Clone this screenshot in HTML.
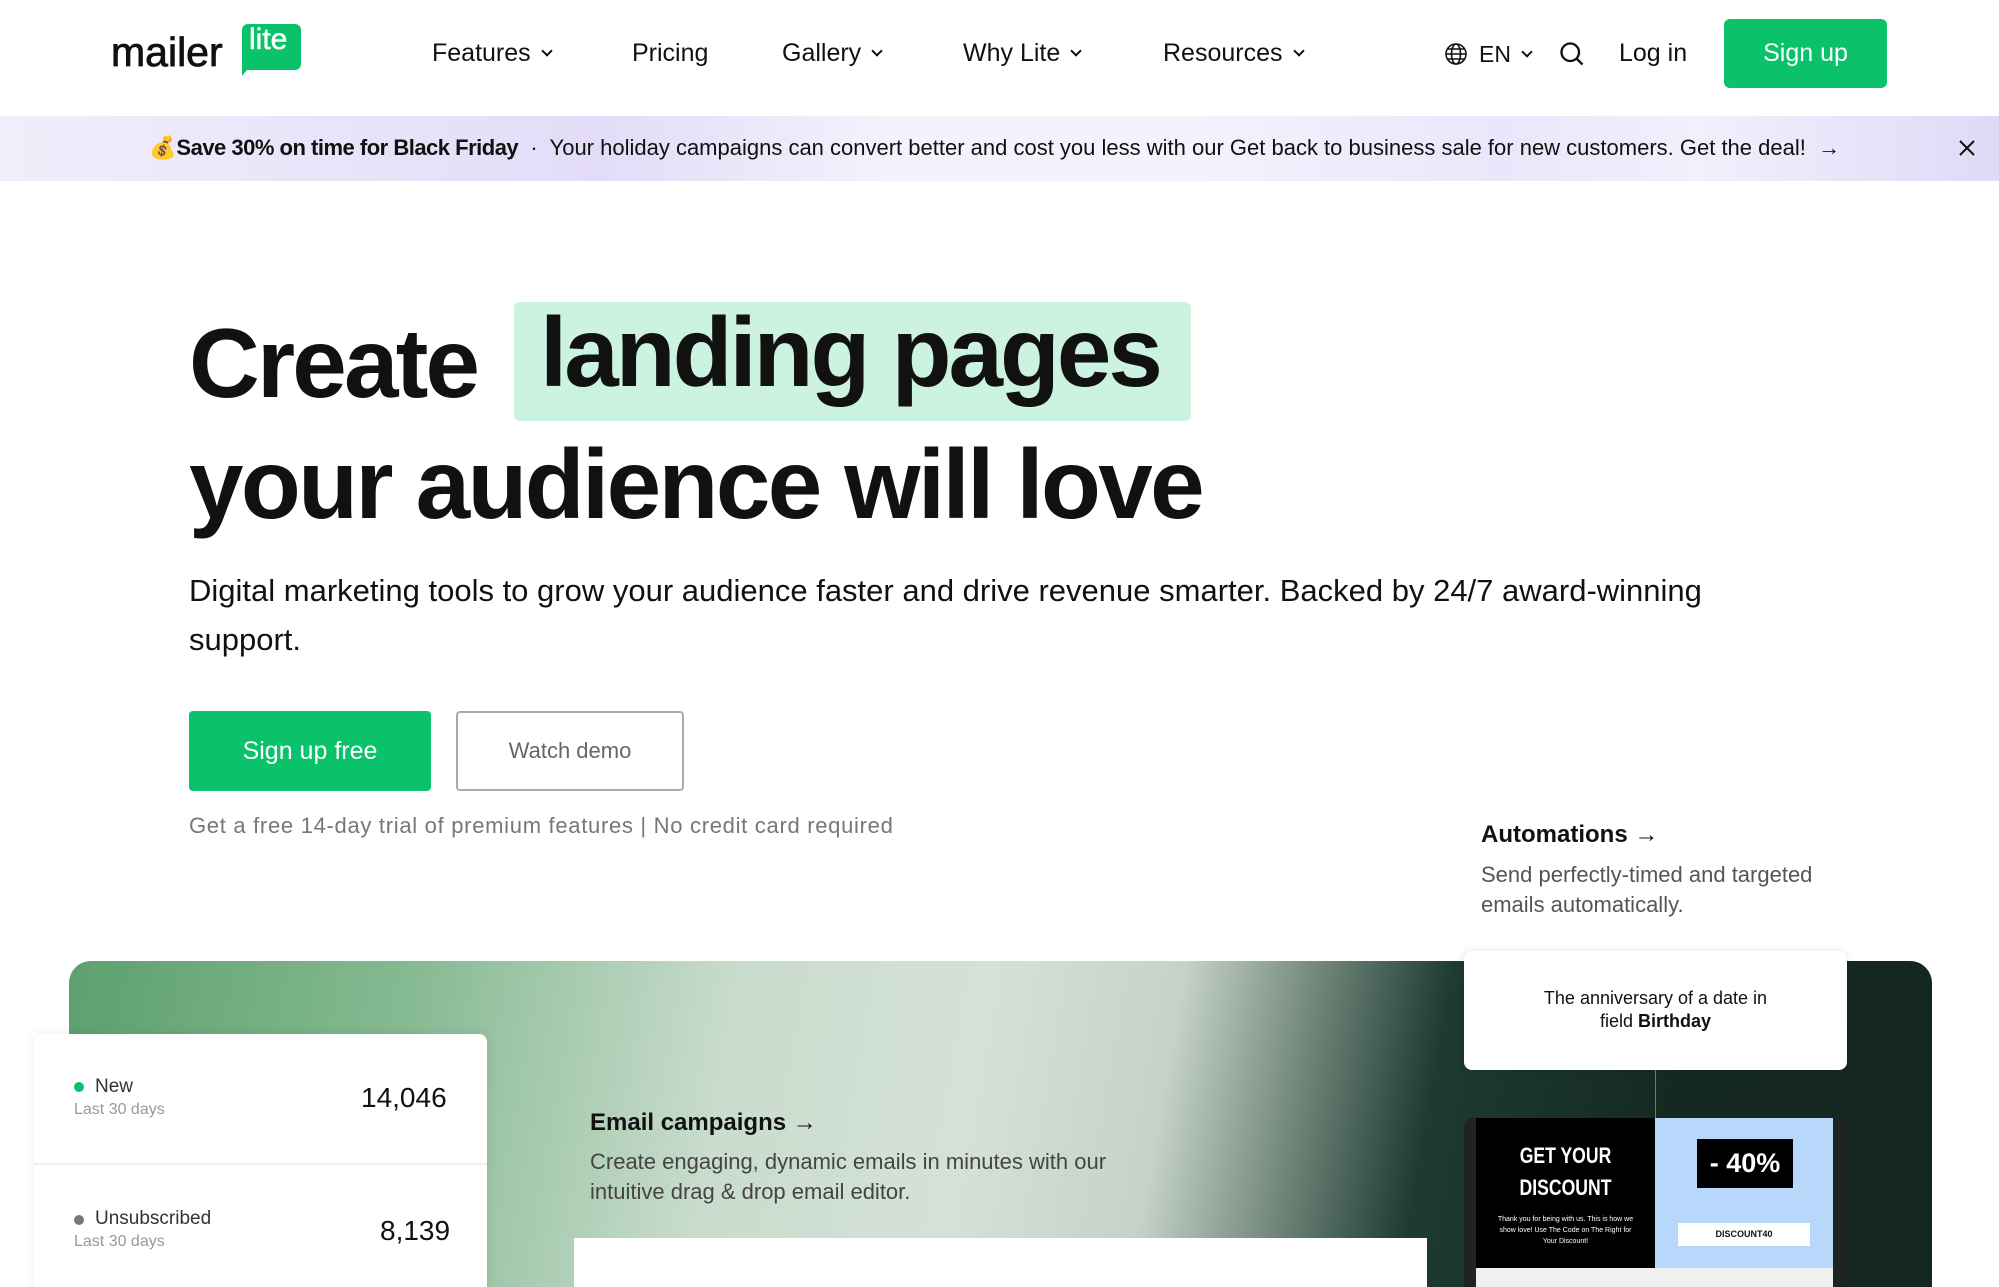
<!DOCTYPE html>
<html><head><meta charset="utf-8"><style>
*{margin:0;padding:0;box-sizing:border-box}
html,body{width:1999px;height:1287px;overflow:hidden}
body{background:#fff;font-family:"Liberation Sans",sans-serif;color:#111;position:relative}
.a{position:absolute;white-space:nowrap}
.nav{font-size:25px;color:#111;top:39px}
.chev{display:inline-block;width:8px;height:8px;border-right:2px solid #111;border-bottom:2px solid #111;transform:rotate(45deg);margin-left:12px;position:relative;top:-6px}
</style></head><body>
<!-- logo -->
<div class="a" style="left:111px;top:29px;font-size:41px;font-weight:400;-webkit-text-stroke:0.8px #111;color:#111">mailer</div>
<div class="a" style="left:242px;top:24px;width:59px;height:46px;background:#09c269;border-radius:6px"></div>
<div class="a" style="left:242px;top:64px;width:0;height:0;border-top:12px solid #09c269;border-right:10px solid transparent"></div>
<div class="a" style="left:249px;top:23px;font-size:30px;color:#fff;-webkit-text-stroke:0.5px #fff">lite</div>
<!-- nav -->
<div class="a nav" style="left:432px">Features<span class="chev"></span></div>
<div class="a nav" style="left:632px">Pricing</div>
<div class="a nav" style="left:782px">Gallery<span class="chev"></span></div>
<div class="a nav" style="left:963px">Why Lite<span class="chev"></span></div>
<div class="a nav" style="left:1163px">Resources<span class="chev"></span></div>
<svg class="a" style="left:1444px;top:42px" width="24" height="24" viewBox="0 0 24 24" fill="none" stroke="#111" stroke-width="1.6"><circle cx="12" cy="12" r="10"/><ellipse cx="12" cy="12" rx="4.5" ry="10"/><path d="M2 12h20M4 7h16M4 17h16"/></svg>
<div class="a nav" style="left:1479px;top:41px;font-size:23px">EN<span class="chev"></span></div>
<svg class="a" style="left:1558px;top:40px" width="28" height="28" viewBox="0 0 24 24" fill="none" stroke="#111" stroke-width="2"><circle cx="10.5" cy="10.5" r="7.5"/><path d="M16 16l5 5"/></svg>
<div class="a nav" style="left:1619px;top:39px">Log in</div>
<div class="a" style="left:1724px;top:19px;width:163px;height:69px;background:#09c269;border-radius:6px;color:#fff;font-size:25px;text-align:center;line-height:69px">Sign up</div>
<!-- banner -->
<div class="a" style="left:0;top:116px;width:1999px;height:65px;background:linear-gradient(90deg,#f1eefb 0%,#e3dcf8 30%,#f6f2fd 45%,#f5f1fd 60%,#ebe6fb 75%,#f3effc 85%,#e0d9f7 100%)"></div>
<div class="a" style="left:149px;top:135px;font-size:22px;color:#111"><span style="color:#c9962e">💰</span><b style="letter-spacing:-0.5px">Save 30% on time for Black Friday</b> &nbsp;·&nbsp; Your holiday campaigns can convert better and cost you less with our Get back to business sale for new customers. Get the deal! &nbsp;→</div>
<svg class="a" style="left:1958px;top:139px" width="18" height="18" viewBox="0 0 18 18" stroke="#111" stroke-width="2"><path d="M2 2l14 14M16 2L2 16"/></svg>
<!-- headline -->
<div class="a" style="left:514px;top:302px;width:677px;height:119px;background:#ccf2e0;border-radius:6px"></div>
<div class="a" style="left:189px;top:303px;font-size:98px;font-weight:700;letter-spacing:-2.8px;line-height:120px">Create</div>
<div class="a" style="left:540px;top:292px;font-size:98px;font-weight:700;letter-spacing:-3px;line-height:120px">landing pages</div>
<div class="a" style="left:189px;top:424px;font-size:98px;font-weight:700;letter-spacing:-2.6px;line-height:120px">your audience will love</div>
<div class="a" style="left:189px;top:566px;font-size:31px;line-height:49px;white-space:normal;width:1600px;color:#111">Digital marketing tools to grow your audience faster and drive revenue smarter. Backed by 24/7 award-winning support.</div>
<div class="a" style="left:189px;top:711px;width:242px;height:80px;background:#09c269;border-radius:4px;color:#fff;font-size:25px;text-align:center;line-height:80px">Sign up free</div>
<div class="a" style="left:456px;top:711px;width:228px;height:80px;border:2px solid #aaa;border-radius:4px;color:#666;font-size:22px;text-align:center;line-height:76px">Watch demo</div>
<div class="a" style="left:189px;top:813px;font-size:22px;color:#777;letter-spacing:.7px">Get a free 14-day trial of premium features | No credit card required</div>
<div class="a" style="left:1481px;top:821px;font-size:24px;font-weight:700">Automations →</div>
<div class="a" style="left:1481px;top:860px;font-size:22px;color:#555;line-height:30px;white-space:normal;width:400px">Send perfectly-timed and targeted emails automatically.</div>
<!-- panel -->
<div class="a" style="left:69px;top:961px;width:1863px;height:360px;border-radius:22px;background:linear-gradient(100deg,#5da06e 0%,#86ba92 18%,#c9dccd 35%,#d5e1d8 48%,#c5d2c7 58%,#1d3b30 72%,#14291f 85%,#142621 100%)"></div>
<div class="a" style="left:34px;top:1034px;width:453px;height:300px;background:#fff;border-radius:8px;box-shadow:0 0 12px rgba(0,0,0,.08)"></div>
<div class="a" style="left:34px;top:1163px;width:453px;height:2px;background:#eee"></div>
<div class="a" style="left:74px;top:1082px;width:10px;height:10px;border-radius:50%;background:#09c269"></div>
<div class="a" style="left:95px;top:1076px;font-size:19px;color:#333">New</div>
<div class="a" style="left:74px;top:1101px;font-size:16px;color:#999">Last 30 days</div>
<div class="a" style="left:361px;top:1082px;font-size:28px">14,046</div>
<div class="a" style="left:74px;top:1215px;width:10px;height:10px;border-radius:50%;background:#777"></div>
<div class="a" style="left:95px;top:1208px;font-size:19px;color:#333">Unsubscribed</div>
<div class="a" style="left:74px;top:1233px;font-size:16px;color:#999">Last 30 days</div>
<div class="a" style="left:380px;top:1215px;font-size:28px">8,139</div>
<div class="a" style="left:590px;top:1109px;font-size:24px;font-weight:700">Email campaigns →</div>
<div class="a" style="left:590px;top:1147px;font-size:22px;color:#444;line-height:30px;white-space:normal;width:580px">Create engaging, dynamic emails in minutes with our intuitive drag &amp; drop email editor.</div>
<div class="a" style="left:574px;top:1238px;width:853px;height:60px;background:#fff"></div>
<div class="a" style="left:1464px;top:951px;width:383px;height:119px;background:#fff;border-radius:8px;box-shadow:0 0 8px rgba(0,0,0,.12);text-align:center;font-size:18px;line-height:23px;padding-top:36px">The anniversary of a date in<br>field <b>Birthday</b></div>
<div class="a" style="left:1655px;top:1070px;width:1px;height:49px;background:#777"></div>
<div class="a" style="left:1464px;top:1118px;width:383px;height:200px;background:#1d2421;border-radius:8px"></div>
<div class="a" style="left:1476px;top:1118px;width:179px;height:150px;background:#000;color:#fff;text-align:center;font-weight:700;font-size:22px;line-height:32px;padding-top:22px;overflow:hidden;white-space:normal"><div style="transform:scaleX(.8)">GET YOUR<br>DISCOUNT</div><div style="font-size:7px;line-height:11px;font-weight:400;padding:10px 18px 0">Thank you for being with us. This is how we show love! Use The Code on The Right for Your Discount!</div></div>
<div class="a" style="left:1655px;top:1118px;width:178px;height:150px;background:#b8d8fb"></div>
<div class="a" style="left:1697px;top:1139px;width:96px;height:49px;background:#000;color:#fff;font-weight:700;font-size:27px;text-align:center;line-height:49px">- 40%</div>
<div class="a" style="left:1678px;top:1223px;width:132px;height:23px;background:#fff;font-size:9px;font-weight:700;text-align:center;line-height:23px">DISCOUNT40</div>
<div class="a" style="left:1476px;top:1268px;width:357px;height:30px;background:#f0f0f0"></div>
</body></html>
